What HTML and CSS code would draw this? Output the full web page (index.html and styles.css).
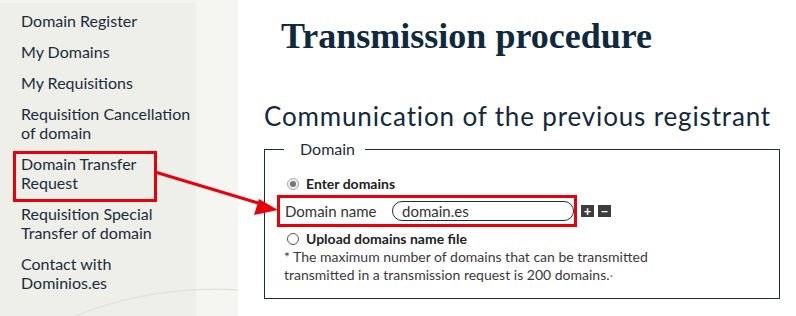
FILE: index.html
```html
<!DOCTYPE html>
<html lang="en">
<head>
    <meta charset="UTF-8">
    <link rel="stylesheet" href="styles.css">
    <title>Transmission procedure</title>
</head>
<body>
    <div class="page">
        <!-- Боковое меню -->
        <aside class="sidebar">
            <ul class="side-menu">
                <li><a href="#">Domain Register</a></li>
                <li><a href="#">My Domains</a></li>
                <li><a href="#">My Requisitions</a></li>
                <li><a href="#">Requisition Cancellation of domain</a></li>
                <li class="marked"><a href="#">Domain Transfer Request</a></li>
                <li><a href="#">Requisition Special Transfer of domain</a></li>
                <li><a href="#">Contact with Dominios.es</a></li>
            </ul>
        </aside>
        <div class="side-strip"></div>

        <!-- Основной блок -->
        <main class="content">
            <h1 class="title">Transmission procedure</h1>
            <h2 class="subtitle">Communication of the previous registrant</h2>

            <fieldset class="domain-box">
                <legend>Domain</legend>
                <label class="radio-row">
                    <span class="radio checked"></span>
                    <span>Enter domains</span>
                </label>
                <div class="name-row-wrap">
                    <div class="name-row marked">
                        <span class="name-label">Domain name</span>
                        <span class="name-input">domain.es</span>
                    </div>
                    <span class="sq-btn">+</span>
                    <span class="sq-btn">&minus;</span>
                </div>
                <label class="radio-row upload">
                    <span class="radio"></span>
                    <span>Upload domains name file</span>
                </label>
                <p class="note">* The maximum number of domains that can be transmitted<br>transmitted in a transmission request is 200 domains.<span class="dot">&middot;</span></p>
            </fieldset>
        </main>

        <!-- Стрелка-пометка поверх страницы -->
        <svg class="overlay" width="796" height="316" viewBox="0 0 796 316">
            <path d="M70 318 Q150 285 238 290" fill="none" stroke="#e3e3da" stroke-width="1.5"/>
            <line x1="155" y1="172" x2="258" y2="203" stroke="#e8000b" stroke-width="3"/>
            <polygon points="278,210 254,215 259,199" fill="#e8000b"/>
        </svg>
    </div>
</body>
</html>
```

FILE: styles.css
```css
body {
    margin: 0;
    padding: 0;
    background: #fff;
    font-family: 'Lato', 'Liberation Sans', sans-serif;
    color: #1c2e3d;
}

.page {
    position: relative;
    width: 796px;
    height: 316px;
    overflow: hidden;
    display: grid;
    grid-template-columns: 196px 42px 1fr;
}

.sidebar {
    background: #efefea;
    border-top: 3px solid #f3f3ef;
}
.side-strip {
    background: #f5f5f1;
}

.side-menu {
    list-style: none;
    margin: 0;
    padding: 8px 0 0 0;
}
.side-menu li {
    margin: 0 0 12px 21px;
    width: 172px;
    font-size: 16px;
    line-height: 19px;
}
.side-menu a {
    color: #1a2c3c;
    text-decoration: none;
}
.side-menu li.marked {
    border: 3px solid #e8000b;
    width: 133px;
    margin: -3px 0 2px 13px;
    padding: 0 0 7px 5px;
}

.content {
    padding: 0 16px 0 26px;
}

.title {
    margin: 16px 0 0 17px;
    font-family: 'Liberation Serif', serif;
    font-size: 36px;
    line-height: 40px;
    font-weight: bold;
    color: #0f2a3d;
}

.subtitle {
    margin: 45px 0 0 0;
    font-size: 26px;
    line-height: 30px;
    letter-spacing: 0.85px;
    font-weight: normal;
    color: #13293a;
}

.domain-box {
    margin: 8px 0 0 0;
    padding: 16px 10px 14px 19px;
    border: 1px solid #1c2e3d;
    height: 160px;
    box-sizing: border-box;
}
.domain-box legend {
    margin-left: 0;
    padding: 0 10px 0 16px;
    font-size: 16px;
    line-height: 20px;
    color: #1c2e3d;
}

.radio-row {
    display: flex;
    align-items: center;
    gap: 7px;
    margin-left: 3px;
    font-size: 14px;
    font-weight: bold;
    color: #222;
    line-height: 18px;
}
.radio {
    width: 10px;
    height: 10px;
    border: 1px solid #555;
    border-radius: 50%;
    background: #fff;
    position: relative;
}
.radio.checked {
    border-color: #aaa;
    background: #eee;
}
.radio.checked::after {
    content: "";
    position: absolute;
    left: 2px;
    top: 2px;
    width: 6px;
    height: 6px;
    border-radius: 50%;
    background: #777;
}

.name-row-wrap {
    display: flex;
    align-items: center;
    gap: 3px;
    margin: 2px 0 0 -7px;
}
.name-row {
    display: flex;
    align-items: center;
    width: 289px;
    height: 26px;
    padding: 0 0 0 5px;
    border: 3px solid #e8000b;
}
.name-label {
    font-size: 15px;
    color: #333;
    width: 107px;
}
.name-input {
    width: 171px;
    height: 18px;
    padding-left: 9px;
    border: 1px solid #1c2e3d;
    border-radius: 10px;
    font-size: 15px;
    line-height: 18px;
    color: #333;
}
.sq-btn {
    width: 13px;
    height: 12px;
    margin-left: 1px;
    background: #3d3d3d;
    color: #fff;
    font-size: 13px;
    font-weight: bold;
    line-height: 12px;
    text-align: center;
}

.upload {
    margin-top: 3px;
}

.note {
    margin: 0;
    font-size: 14px;
    line-height: 18px;
    color: #3a3a3a;
}
.note .dot {
    color: #999;
}

.overlay {
    position: absolute;
    left: 0;
    top: 0;
    pointer-events: none;
}
```
